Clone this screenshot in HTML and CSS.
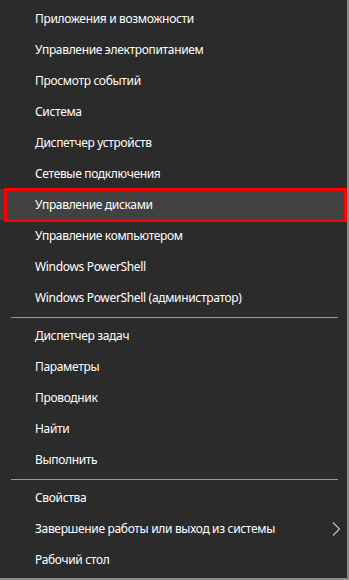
FILE: index.html
```html
<!DOCTYPE html>
<html lang="ru">
<head>
    <meta charset="UTF-8">
    <meta name="viewport" content="width=device-width, initial-scale=1.0">
    <title>Меню</title>
    <link rel="stylesheet" href="styles.css">
</head>
<body>
    <div class="menu">
        <div class="group">
            <div class="item">Приложения и возможности</div>
            <div class="item">Управление электропитанием</div>
            <div class="item">Просмотр событий</div>
            <div class="item">Система</div>
            <div class="item">Диспетчер устройств</div>
            <div class="item">Сетевые подключения</div>
            <div class="item item-active">Управление дисками</div>
            <div class="item">Управление компьютером</div>
            <div class="item">Windows PowerShell</div>
            <div class="item">Windows PowerShell (администратор)</div>
        </div>
        <div class="sep"></div>
        <div class="group">
            <div class="item">Диспетчер задач</div>
            <div class="item">Параметры</div>
            <div class="item">Проводник</div>
            <div class="item">Найти</div>
            <div class="item">Выполнить</div>
        </div>
        <div class="sep"></div>
        <div class="group">
            <div class="item">Свойства</div>
            <div class="item item-sub">
                <span>Завершение работы или выход из системы</span>
                <svg class="chevron" width="9" height="14" viewBox="0 0 9 14">
                    <path d="M1 0.5 L7.5 7 L1 13.5" fill="none" stroke="#c8c8c8" stroke-width="1.1"/>
                </svg>
            </div>
            <div class="item">Рабочий стол</div>
        </div>
    </div>
</body>
</html>
```

FILE: styles.css
```css
html, body {
    margin: 0;
    padding: 0;
    background-color: #2b2b2b;
}
.menu {
    width: 349px;
    height: 580px;
    box-sizing: border-box;
    background-color: #2b2b2b;
    border-right: 2px solid #8c8c8c;
    border-bottom: 2px solid #8c8c8c;
    padding-top: 3px;
    font-family: "Noto Sans", "Open Sans", sans-serif;
    font-size: 12px;
    letter-spacing: -0.33px;
    color: #ffffff;
}
.item {
    height: 31px;
    line-height: 31px;
    padding-left: 35px;
    white-space: nowrap;
}
.item-active {
    position: relative;
    background-color: #414141;
}
.item-active::after {
    content: "";
    position: absolute;
    left: 4px;
    right: 0;
    top: -1px;
    bottom: -2px;
    border: 3px solid #ff0000;
}
.item-sub {
    display: flex;
    align-items: center;
    justify-content: space-between;
    padding-right: 6px;
}
.chevron {
    display: block;
}
.sep {
    height: 1px;
    background-color: #9a9a9a;
    margin: 4px 9px 2px 11px;
}
```
